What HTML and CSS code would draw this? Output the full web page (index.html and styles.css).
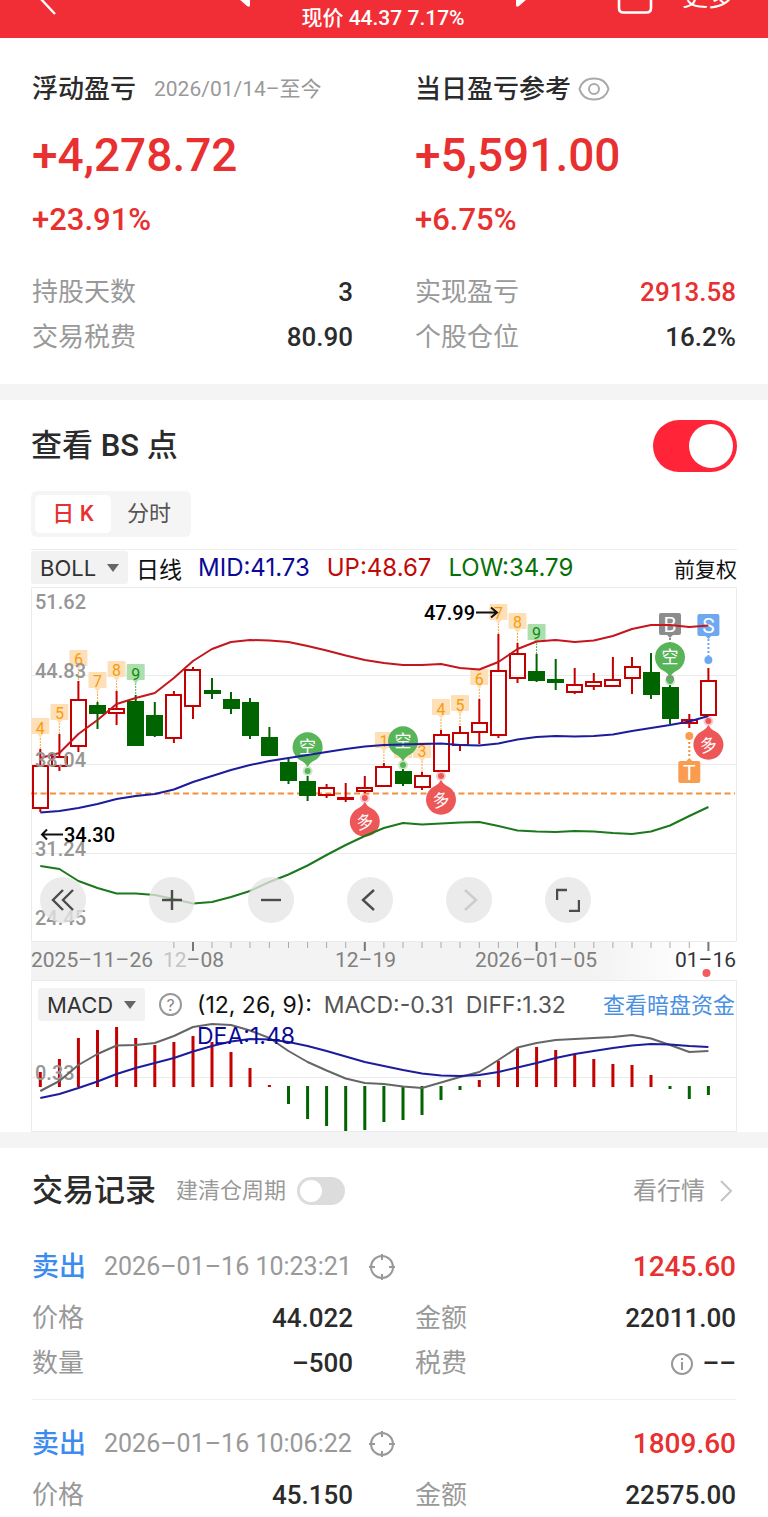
FILE: index.html
```html
<!DOCTYPE html>
<html lang="zh-CN">
<head>
<meta charset="utf-8">
<meta name="viewport" content="width=device-width, initial-scale=1">
<title>个股盈亏</title>
<link rel="stylesheet" href="styles.css">
</head>
<body>
<header class="topbar">
  <button class="topbar-back" aria-label="返回"><svg width="24" height="16" viewBox="0 0 24 16"><path d="M8-2 23 14" fill="none" stroke="currentColor" stroke-width="2.4"/></svg></button>
  <div class="topbar-center">
    <button aria-label="上一只"><svg width="12" height="10" viewBox="0 0 12 10"><path d="M0-1 8 6Q11 8 11 5V-1Z" fill="currentColor"/></svg></button>
    <span class="topbar-price">现价 44.37 7.17%</span>
    <button aria-label="下一只"><svg width="12" height="10" viewBox="0 0 12 10"><path d="M12-1 4 6Q1 8 1 5V-1Z" fill="currentColor"/></svg></button>
  </div>
  <div class="topbar-actions">
    <button aria-label="分享"><svg width="36" height="16" viewBox="0 0 36 16"><path d="M2-4V8Q2 12.500 6.500 12.500H29.500Q34 12.500 34 8V-4" fill="none" stroke="currentColor" stroke-width="2.6"/></svg></button>
    <button class="topbar-more">更多</button>
  </div>
</header>

<main>
<section class="summary">
  <div class="summary-col">
    <h2 class="summary-title">浮动盈亏<span class="summary-range">2026/01/14–至今</span></h2>
    <p class="summary-amount">+4,278.72</p>
    <p class="summary-rate">+23.91%</p>
    <dl class="facts">
      <div class="fact"><dt>持股天数</dt><dd>3</dd></div>
      <div class="fact"><dt>交易税费</dt><dd>80.90</dd></div>
    </dl>
  </div>
  <div class="summary-col">
    <h2 class="summary-title">当日盈亏参考<button class="eye" aria-label="隐藏金额"><svg width="32" height="24" viewBox="0 0 32 24"><g fill="none" stroke="currentColor" stroke-width="2"><path d="M1.500 12C3.500 5 9 1.500 16 1.500S28.500 5 30.500 12C28.500 19 23 22.500 16 22.500S3.500 19 1.500 12Z"/><circle cx="16" cy="12" r="5"/></g></svg></button></h2>
    <p class="summary-amount">+5,591.00</p>
    <p class="summary-rate">+6.75%</p>
    <dl class="facts">
      <div class="fact"><dt>实现盈亏</dt><dd class="up">2913.58</dd></div>
      <div class="fact"><dt>个股仓位</dt><dd>16.2%</dd></div>
    </dl>
  </div>
</section>

<section class="market">
  <div class="market-head">
    <label class="section-title" for="bs">查看 BS 点</label>
    <input class="switch switch-large" type="checkbox" id="bs" checked>
  </div>
  <div class="segment">
    <button class="segment-item is-active">日 K</button>
    <button class="segment-item">分时</button>
  </div>

  <div class="legend">
    <div class="picker"><select aria-label="主图指标"><option>BOLL</option></select><svg width="12" height="8" viewBox="0 0 12 8"><path d="M0 0H12L6 8Z" fill="currentColor"/></svg></div>
    <span class="legend-period">日线</span>
    <span class="mid">MID:41.73</span>
    <span class="upper">UP:48.67</span>
    <span class="lower">LOW:34.79</span>
    <span class="legend-adjust">前复权</span>
  </div>

  <div class="kline">
    <svg class="chart" viewBox="31 587 706 393" role="img" aria-label="日K线图">
      <defs>
        <linearGradient id="axis-bg" x1="0" x2="1"><stop offset="0" stop-color="#f3f3f3"/><stop offset=".8" stop-color="#f3f3f3"/><stop offset=".95" stop-color="#fff"/></linearGradient>
        <path id="tag" d="M-8-1H8Q9-1 9 0V14Q9 15 8 15H3L0 19-3 15H-8Q-9 15-9 14V0Q-9-1-8-1Z"/>
        <g id="pin"><path d="M0 20C-2 17-3 15.500-7 13.500A15 15 0 1 1 7 13.500C3 15.500 2 17 0 20Z"/><circle cy="24" r="5" opacity=".3"/><circle cy="24" r="3"/></g>
        <path id="flag" d="M-9-11H9Q11-11 11-9V9Q11 11 9 11H3L0 14-3 11H-9Q-11 11-11 9V-9Q-11-11-9-11Z"/>
      </defs>
      <path class="grid" d="M31 675.500H737M31 764.500H737M31 853.500H737"/>
      <rect x="31" y="942" width="706" height="38" fill="url(#axis-bg)"/>
      <path class="frame" d="M31.500 941.500V587.500H736.500V941.500Z"/>

      <g class="leader">
        <path d="M40.300 738V749M59.400 723V734M78.400 669V681M97.500 691V702M116.600 680V691M383.900 751V763M422 761V772M441 719V730M460 714V726M479.300 689V699M498.400 623V634M517.500 633V643"/>
        <path class="leader-green" d="M135.700 683V695M536.600 643V654"/>
      </g>
      <g class="tags">
        <use href="#tag" x="40.300" y="719"/><use href="#tag" x="59.400" y="705"/><use href="#tag" x="78.400" y="651"/><use href="#tag" x="97.500" y="673"/><use href="#tag" x="116.600" y="662"/>
        <use href="#tag" x="383.900" y="733"/><use href="#tag" x="403" y="743"/><use href="#tag" x="422" y="743"/><use href="#tag" x="441" y="700"/><use href="#tag" x="460" y="696"/><use href="#tag" x="479.300" y="670"/><use href="#tag" x="498.400" y="605"/><use href="#tag" x="517.500" y="614"/>
      </g>
      <g class="tags-green"><use href="#tag" x="135.700" y="665"/><use href="#tag" x="536.600" y="625"/></g>
      <g class="tag-text">
        <text x="40.300" y="734">4</text><text x="59.400" y="719">5</text><text x="78.400" y="665">6</text><text x="97.500" y="687">7</text><text x="116.600" y="676">8</text>
        <text x="383.900" y="747">1</text><text x="403" y="757">2</text><text x="422" y="757">3</text><text x="441" y="715">4</text><text x="460" y="711">5</text><text x="479.300" y="685">6</text><text x="498.400" y="619">7</text><text x="517.500" y="628">8</text>
        <text class="nine" x="135.700" y="680">9</text><text class="nine" x="536.600" y="639">9</text>
      </g>

      <path class="avg-price" d="M31 793.500H735"/>

      <path class="wick wick-up" d="M40.300 749V766M40.300 808V812M59.400 734V757M59.400 766V771M78.400 681V700M78.400 746V752M116.600 691V709M116.600 713V725M173.900 691V695M173.900 738V743M193 667V670M193 706V719M326.600 784V788M326.600 796V798M345.700 783V802M364.800 776V788M364.800 791V793M383.900 763V767M422 772V776M422 788V790M441 730V735M460 726V732M460 745V751M479.300 699V723M479.300 732V744M498.400 634V671M498.400 735V738M517.500 643V653M517.500 678V683M574.700 668V685M574.700 692V694M593.800 673V681M593.800 687V690M612.900 657V679M612.900 686V687M632 657V667M632 678V694M689.300 714V720M689.300 723V728M708.400 668V681"/>
      <path class="wick wick-down" d="M97.500 702V729M135.700 695V746M154.800 702V737M212 678V699M231 692V714M250 698V739M269.400 727V756M288.500 759V784M307.600 776V801M403 769V786M536.600 654V682M555.700 659V690M651 653V699M670 685V724"/>
      <g class="body-down">
        <rect x="89" y="705" width="17" height="9"/><rect x="127" y="701" width="17" height="45"/><rect x="146" y="715" width="17" height="21"/><rect x="204" y="690" width="17" height="4"/><rect x="223" y="699" width="17" height="10"/><rect x="242" y="702" width="17" height="34"/><rect x="261" y="737" width="17" height="19"/><rect x="280" y="762" width="17" height="19"/><rect x="299" y="781" width="17" height="15"/><rect x="395" y="771" width="17" height="13"/><rect x="528" y="671" width="17" height="10"/><rect x="547" y="679" width="17" height="4"/><rect x="643" y="672" width="17" height="23"/><rect x="662" y="687" width="17" height="32"/>
      </g>
      <g class="body-up">
        <rect x="33" y="766" width="15" height="42"/><rect x="52" y="757" width="15" height="9"/><rect x="71" y="700" width="15" height="46"/><rect x="109" y="709" width="15" height="4"/><rect x="166" y="695" width="15" height="43"/><rect x="185" y="670" width="15" height="36"/><rect x="319" y="788" width="15" height="7"/><rect x="338" y="798" width="15" height="1"/><rect x="357" y="788" width="15" height="3"/><rect x="376" y="767" width="15" height="19"/><rect x="415" y="776" width="15" height="11"/><rect x="434" y="735" width="15" height="36"/><rect x="453" y="733" width="15" height="12"/><rect x="472" y="723" width="15" height="9"/><rect x="491" y="671" width="15" height="64"/><rect x="510" y="654" width="15" height="24"/><rect x="567" y="685" width="15" height="7"/><rect x="586" y="682" width="15" height="4"/><rect x="605" y="680" width="15" height="6"/><rect x="625" y="667" width="15" height="11"/><rect x="682" y="720" width="15" height="3"/><rect x="701" y="681" width="15" height="34"/>
      </g>

      <g class="pin-long"><use href="#pin" transform="translate(364.800 822) rotate(180)"/><use href="#pin" transform="translate(441 800) rotate(180)"/><use href="#pin" transform="translate(708.400 745) rotate(180)"/></g>
      <g class="pin-text"><text x="364.800" y="828" transform="rotate(-12 364.800 822)">多</text><text x="441" y="806" transform="rotate(-12 441 800)">多</text><text x="708.400" y="751" transform="rotate(-12 708.400 745)">多</text></g>

      <g class="flag-b"><use href="#flag" x="670" y="624"/><path d="M670 638V676"/><circle cx="670" cy="679" r="4"/></g>
      <g class="flag-s"><use href="#flag" x="708.400" y="625"/><path d="M708.400 639V658"/><circle cx="708.400" cy="660" r="4"/></g>
      <g class="flag-t"><use href="#flag" transform="translate(689.300 772) rotate(180)"/><path d="M689.300 738V758"/><circle cx="689.300" cy="736" r="4"/></g>
      <g class="flag-text"><text x="670" y="632">B</text><text x="708.400" y="633">S</text><text x="689.300" y="780">T</text></g>

      <g class="pin-short"><use href="#pin" x="307.600" y="747"/><use href="#pin" x="403" y="741"/><use href="#pin" x="670" y="657"/></g>
      <g class="pin-text"><text x="307.600" y="753">空</text><text x="403" y="747">空</text><text x="670" y="663">空</text></g>

      <polyline class="line upper-line" points="40.300,758 59.400,753 78.400,734 97.500,720 116.600,704 135.700,698 154.800,693 173.900,678 193,661 212,649 231,642 250,640 269.400,640.500 288.500,642 307.600,646 326.600,650.500 345.700,655.500 364.800,660 383.900,663 403,665 422,665 441,664 460,668 479.300,669.500 498.400,662 517.500,649 536.600,641.500 555.700,640 574.700,642 593.800,640.500 612.900,636 632,629 651,625 670,625 689.300,627 708.400,625.500"/>
      <polyline class="line mid-line" points="40.300,812.500 59.400,811 78.400,808 97.500,804 116.600,799 135.700,796 154.800,794 173.900,789.500 193,782 212,776 231,770 250,765 269.400,761 288.500,758 307.600,755 326.600,752 345.700,749 364.800,746.500 383.900,745 403,744.500 422,744 441,743.500 460,745 479.300,745.500 498.400,743.500 517.500,739.500 536.600,737 555.700,736 574.700,736.500 593.800,736 612.900,734.500 632,731 651,728 670,725 689.300,721.500 708.400,716"/>
      <polyline class="line lower-line" points="40.300,866 59.400,869 78.400,881 97.500,888 116.600,893.500 135.700,893.500 154.800,895 173.900,899 193,903.500 212,902 231,897 250,891 269.400,882 288.500,874.500 307.600,865.500 326.600,855 345.700,845 364.800,836 383.900,828 403,823 422,824.500 441,823.500 460,822.500 479.300,822 498.400,826 517.500,830.500 536.600,831.500 555.700,832 574.700,831 593.800,831.500 612.900,833 632,834 651,831.500 670,825.500 689.300,816 708.400,807"/>

      <g class="scale"><text x="35" y="609">51.62</text><text x="35" y="678">44.83</text><text x="35" y="767">38.04</text><text x="35" y="856">31.24</text><text x="35" y="925">24.45</text></g>
      <g class="extreme"><text x="424" y="620">47.99</text><path d="M476 612.500H497M491 607.500 497 612.500 491 617.500"/><text x="64" y="842">34.30</text><path d="M63 834.500H42M47 829.500 42 834.500 47 839.500"/></g>

      <path class="tick" d="M173.900 942V948M212 942V948M231 942V948M250 942V948M269.400 942V948M288.500 942V948M307.600 942V948M326.600 942V948M345.700 942V948M383.900 942V948M403 942V948M422 942V948M441 942V948M460 942V948M479.300 942V948M498.400 942V948M517.500 942V948M555.700 942V948M574.700 942V948M593.800 942V948M612.900 942V948M632 942V948M651 942V948M670 942V948M689.300 942V948"/>
      <path class="tick-major" d="M193 942V951M364.800 942V951M536.600 942V951M708.400 942V951"/>
      <g class="dates"><text x="31" y="967">2025–11–26</text><text x="163" y="967"><tspan class="faded">12</tspan>–08</text><text x="335" y="967">12–19</text><text x="475" y="967">2026–01–05</text><text class="current" x="736" y="967">01–16</text></g>
      <circle cx="706.500" cy="973" r="4" fill="#f25c5c"/>
    </svg>
    <div class="tools">
      <button class="tool tool-first" aria-label="最早"><svg width="24" height="24" viewBox="0 0 24 24"><path d="M12 2 2 12 12 22M22 2 12 12 22 22"/></svg></button>
      <button class="tool" aria-label="放大"><svg width="24" height="24" viewBox="0 0 24 24"><path d="M12 2V22M2 12H22"/></svg></button>
      <button class="tool" aria-label="缩小"><svg width="24" height="24" viewBox="0 0 24 24"><path d="M2 12H22"/></svg></button>
      <button class="tool" aria-label="向前"><svg width="24" height="24" viewBox="0 0 24 24"><path d="M16 2 5 12 16 22"/></svg></button>
      <button class="tool" aria-label="向后" disabled><svg width="24" height="24" viewBox="0 0 24 24"><path d="M8 2 19 12 8 22"/></svg></button>
      <button class="tool" aria-label="全屏"><svg width="24" height="24" viewBox="0 0 24 24"><path d="M1 12V2H11M23 12V23H13"/></svg></button>
    </div>
  </div>

  <div class="macd">
    <svg class="chart" viewBox="31 980 706 152" role="img" aria-label="MACD">
      <path class="frame" d="M31.500 980.500H736.500V1131.500H31.500Z"/>
      <path class="grid" d="M31 1077.500H737"/>
      <path class="bar bar-up" d="M40.300 1072V1087M59.400 1059V1087M78.400 1038V1087M97.500 1030V1087M116.600 1027V1087M135.700 1038V1087M154.800 1045V1087M173.900 1042V1087M193 1036V1087M212 1042V1087M231 1052V1087M250 1068V1087M269.400 1085V1087M479.300 1080V1087M498.400 1061V1087M517.500 1047V1087M536.600 1047V1087M555.700 1050V1087M574.700 1054V1087M593.800 1059V1087M612.900 1064V1087M632 1065V1087M651 1075V1087"/>
      <path class="bar bar-down" d="M288.500 1086V1104M307.600 1086V1119M326.600 1086V1126M345.700 1086V1131M364.800 1086V1130M383.900 1086V1122M403 1086V1120M422 1086V1115M441 1086V1100M460 1086V1090M670 1086V1089M689.300 1086V1099M708.400 1086V1095"/>
      <text class="scale" x="35" y="1080">0.33</text>
      <polyline class="line diff-line" points="40.300,1091 59.400,1081 78.400,1065 97.500,1054 116.600,1045.500 135.700,1045 154.800,1043 173.900,1036 193,1027 212,1024 231,1025 250,1030.500 269.400,1038 288.500,1051 307.600,1062 326.600,1070.500 345.700,1078.500 364.800,1083 383.900,1084 403,1086.500 422,1088 441,1082.500 460,1077 479.300,1072 498.400,1060 517.500,1047.500 536.600,1043 555.700,1040 574.700,1039 593.800,1038 612.900,1037 632,1035 651,1038.500 670,1045 689.300,1052 708.400,1051"/>
      <polyline class="line mid-line" points="40.300,1098 59.400,1094 78.400,1088 97.500,1081.500 116.600,1074 135.700,1068 154.800,1063 173.900,1058 193,1051.500 212,1046 231,1041.500 250,1039 269.400,1039.500 288.500,1042 307.600,1046 326.600,1051 345.700,1056.500 364.800,1062 383.900,1066 403,1070 422,1073.500 441,1075.500 460,1076 479.300,1075 498.400,1072 517.500,1067.500 536.600,1063 555.700,1058 574.700,1054 593.800,1051 612.900,1048 632,1045.500 651,1044 670,1044.500 689.300,1046 708.400,1047"/>
    </svg>
    <div class="macd-head">
      <div class="picker"><select aria-label="副图指标"><option>MACD</option></select><svg width="12" height="8" viewBox="0 0 12 8"><path d="M0 0H12L6 8Z" fill="currentColor"/></svg></div>
      <button class="help" aria-label="指标说明">?</button>
      <p class="macd-values"><span>(12, 26, 9):</span> <span class="diff">MACD:-0.31</span> <span class="diff">DIFF:1.32</span> <span class="mid">DEA:1.48</span></p>
      <a class="macd-link" href="#funds">查看暗盘资金</a>
    </div>
  </div>
</section>

<section class="trades">
  <div class="trades-head">
    <h2 class="section-title">交易记录</h2>
    <label class="cycle" for="cycle">建清仓周期</label>
    <input class="switch" type="checkbox" id="cycle">
    <a class="quote-link" href="#quote">看行情<svg width="14" height="24" viewBox="0 0 14 24"><path d="M2 2 12 12 2 22" fill="none" stroke="#c4c4c4" stroke-width="2"/></svg></a>
  </div>

  <article class="trade">
    <div class="trade-head">
      <span class="side">卖出</span><time>2026–01–16 10:23:21</time>
      <button class="locate" aria-label="定位"><svg width="26" height="28" viewBox="0 0 26 28"><g fill="none" stroke="currentColor" stroke-width="2"><circle cx="13" cy="14" r="11"/><path d="M13 1V7M13 21V27M0 14H6M20 14H26"/></g></svg></button>
      <strong class="profit">1245.60</strong>
    </div>
    <dl class="trade-facts">
      <div class="fact"><dt>价格</dt><dd>44.022</dd></div>
      <div class="fact"><dt>金额</dt><dd>22011.00</dd></div>
      <div class="fact"><dt>数量</dt><dd>–500</dd></div>
      <div class="fact"><dt>税费</dt><dd class="fee"><svg width="24" height="24" viewBox="0 0 24 24"><g fill="none" stroke="#999" stroke-width="2"><circle cx="12" cy="12" r="10"/><path d="M12 10V18M12 6V8"/></g></svg>––</dd></div>
    </dl>
  </article>

  <article class="trade">
    <div class="trade-head">
      <span class="side">卖出</span><time>2026–01–16 10:06:22</time>
      <button class="locate" aria-label="定位"><svg width="26" height="28" viewBox="0 0 26 28"><g fill="none" stroke="currentColor" stroke-width="2"><circle cx="13" cy="14" r="11"/><path d="M13 1V7M13 21V27M0 14H6M20 14H26"/></g></svg></button>
      <strong class="profit">1809.60</strong>
    </div>
    <dl class="trade-facts">
      <div class="fact"><dt>价格</dt><dd>45.150</dd></div>
      <div class="fact"><dt>金额</dt><dd>22575.00</dd></div>
    </dl>
  </article>
</section>
</main>
</body>
</html>
```

FILE: styles.css
```css
* { box-sizing: border-box; }
body, h2, p, dl, dd { margin: 0; }
body {
  background: #fff;
  color: #2b2b2b;
  font-family: Roboto, "Noto Sans CJK SC", sans-serif;
}
svg { display: block; }
button {
  padding: 0;
  border: 0;
  background: none;
  color: inherit;
  font: inherit;
}
a { text-decoration: none; }

/* Top bar */
.topbar {
  display: grid;
  grid-template-columns: 1fr auto 1fr;
  align-items: start;
  height: 38px;
  padding: 0 34px 0 32px;
  overflow: hidden;
  background: #f12e36;
  color: #fff;
}
.topbar button { display: block; }
.topbar-back { justify-self: start; }
.topbar-center { display: flex; align-items: flex-start; gap: 50px; }
.topbar-price { padding-top: 3px; font-size: 21px; font-weight: 500; line-height: 30px; }
.topbar-actions { display: flex; justify-content: flex-end; gap: 29px; }
.topbar .topbar-more { margin-top: -22px; font-size: 26px; line-height: 36px; }

/* Profit summary */
.summary {
  display: grid;
  grid-template-columns: 1fr 1fr;
  gap: 62px;
  padding: 33px 32px 24px;
}
.summary-title {
  display: flex;
  align-items: center;
  font-size: 26px;
  font-weight: 500;
  line-height: 36px;
  white-space: nowrap;
}
.summary-range { margin-left: 18px; color: #999; font-size: 21px; font-weight: 400; }
.eye { margin-left: 7px; color: #aaa; }
.summary-amount { margin-top: 18px; color: #e93030; font-size: 46px; font-weight: 500; line-height: 60px; }
.summary-rate { margin-top: 17px; color: #e93030; font-size: 31px; font-weight: 500; line-height: 36px; }
.facts { margin-top: 32px; }
.fact { display: flex; justify-content: space-between; line-height: 45px; }
.fact dt { color: #999; font-size: 26px; }
.fact dd { font-size: 26px; font-weight: 500; }
.fact .up { color: #e93030; }
.fact .fee { display: flex; align-items: center; gap: 9px; }

/* Switches */
.switch {
  display: flex;
  align-items: center;
  appearance: none;
  width: 48px;
  height: 28px;
  margin: 0;
  padding: 3px;
  border-radius: 14px;
  background: #dcdcdc;
}
.switch::before { content: ""; width: 22px; height: 22px; border-radius: 50%; background: #fff; }
.switch-large { width: 84px; height: 52px; border-radius: 26px; padding: 4px; }
.switch-large::before { width: 44px; height: 44px; }
.switch:checked { justify-content: flex-end; background: #ff2438; }

/* Chart section */
.market { padding: 20px 31px 0; border-top: 16px solid #f4f4f4; border-bottom: 16px solid #f4f4f4; }
.market-head { display: flex; align-items: center; justify-content: space-between; }
.section-title { font-size: 31px; font-weight: 500; line-height: 46px; }
.segment {
  display: inline-flex;
  height: 46px;
  margin-top: 19px;
  padding: 4px;
  border-radius: 6px;
  background: #f5f5f5;
  vertical-align: top;
}
.segment-item { width: 76px; border-radius: 5px; color: #555; font-size: 22px; line-height: 38px; }
.segment-item.is-active { background: #fff; color: #e93030; font-weight: 500; }

.legend {
  display: flex;
  align-items: center;
  height: 38px;
  margin-top: 12px;
  padding-bottom: 2px;
  border-top: 1px solid #ececec;
  font-family: Inter, "Noto Sans CJK SC", sans-serif;
  font-size: 24px;
  line-height: 34px;
  white-space: nowrap;
}
.picker {
  display: flex;
  align-items: center;
  gap: 10px;
  height: 33px;
  padding: 0 9px;
  border-radius: 3px;
  background: #f2f2f2;
  color: #666;
}
.picker select {
  appearance: none;
  padding: 0;
  border: 0;
  background: none;
  color: #333;
  font-family: Inter, sans-serif;
  font-size: 22px;
}
.legend-period { margin-left: 8px; color: #111; font-family: "Noto Sans CJK SC", sans-serif; font-size: 23px; }
.legend .mid { margin-left: 16px; }
.mid { color: #0a0a96; }
.upper { margin-left: 17px; color: #c00a0a; }
.lower { margin-left: 17px; color: #067006; }
.legend-adjust { margin-left: auto; color: #111; font-family: "Noto Sans CJK SC", sans-serif; font-size: 21px; }

.kline, .macd { position: relative; }
.chart { width: 100%; height: auto; font-family: Roboto, "Noto Sans CJK SC", sans-serif; }
.grid, .frame { fill: none; stroke: #ebebeb; stroke-width: 1; }
.line { fill: none; stroke-width: 2; stroke-linejoin: round; }
.upper-line { stroke: #c4161c; }
.mid-line { stroke: #1c1c9c; }
.lower-line { stroke: #1c781c; }
.diff-line { stroke: #666; }
.avg-price { stroke: #f58f3c; stroke-width: 2; stroke-dasharray: 6 3.5; }
.wick { stroke-width: 2; }
.wick-up { stroke: #c40000; }
.wick-down { stroke: #006400; }
.body-up { fill: none; stroke: #c40000; stroke-width: 2; }
.body-down { fill: #006400; }
.bar { fill: none; stroke-width: 3; }
.bar-up { stroke: #c40000; }
.bar-down { stroke: #006400; }
.leader { fill: none; stroke: #f7a940; stroke-width: 1; stroke-dasharray: 2 1; }
.leader-green { stroke: #4db04d; }
.tags { fill: #fde0b8; }
.tags-green { fill: #addfad; }
.tag-text { fill: #fa9a0c; font-size: 16px; text-anchor: middle; }
.nine { fill: #0c8c0c; }
.pin-long { fill: #ed5757; }
.pin-short { fill: #57b457; }
.pin-text { fill: #fff; font-size: 17px; text-anchor: middle; }
.flag-b { fill: #8c8c8c; }
.flag-s { fill: #6ea8f0; }
.flag-t { fill: #fa9c50; }
.flag-b > path, .flag-s > path, .flag-t > path { stroke-width: 2; stroke-dasharray: 2 2; }
.flag-b > path { stroke: #8c8c8c; }
.flag-s > path { stroke: #6ea8f0; }
.flag-t > path { stroke: #f58f3c; }
.flag-text { fill: #fff; font-size: 21px; text-anchor: middle; }
.scale { fill: #969696; font-size: 20px; font-weight: 500; }
.extreme { fill: #000; font-size: 20px; font-weight: 500; }
.extreme path { fill: none; stroke: #111; stroke-width: 2; }
.tick { stroke: #aaa; }
.tick-major { stroke: #777; stroke-width: 2; }
.dates { fill: #808080; font-size: 21px; }
.dates .faded { fill: #c4c4c4; }
.dates .current { fill: #333; text-anchor: end; }

.tools { position: absolute; left: 9px; bottom: 57px; display: flex; gap: 53px; }
.tool {
  display: grid;
  place-items: center;
  width: 46px;
  height: 46px;
  border-radius: 50%;
  background: rgba(230, 230, 230, .78);
  color: #4c4c4c;
}
.tool svg { fill: none; stroke: currentColor; stroke-width: 2.4; }
.tool:disabled { color: #ccc; }
.tool-first { margin-right: 10px; }

.macd-head {
  position: absolute;
  top: 8px;
  left: 7px;
  right: 2px;
  display: flex;
  align-items: flex-start;
  font-family: Inter, "Noto Sans CJK SC", sans-serif;
  font-size: 22px;
  line-height: 33px;
}
.help {
  width: 23px;
  height: 23px;
  margin: 5px 0 0 14px;
  border: 2px solid #999;
  border-radius: 50%;
  color: #888;
  font-size: 16px;
  line-height: 18px;
}
.macd-values {
  display: flex;
  flex-wrap: wrap;
  flex: 1;
  column-gap: 12px;
  margin-left: 15px;
  padding-top: 2px;
  color: #111;
  font-size: 23px;
  line-height: 31px;
  white-space: nowrap;
}
.macd-values .diff { color: #555; }
.macd-link { padding-top: 1px; color: #4a90e2; }

/* Trade records */
.trades { padding: 20px 32px 0; }
.trades-head { display: flex; align-items: center; line-height: 46px; }
.cycle { margin: 0 11px 0 20px; color: #999; font-size: 22px; }
.quote-link { display: flex; align-items: center; gap: 14px; margin-left: auto; padding-right: 3px; color: #999; font-size: 24px; }
.trade { padding: 22px 0 13px; }
.trades-head + .trade { margin-top: 9px; }
.trade + .trade { padding-bottom: 0; border-top: 1px solid #f0f0f0; }
.trade-head { display: flex; align-items: center; line-height: 44px; }
.side { color: #3c8cf0; font-size: 27px; font-weight: 500; }
.trade-head time { margin-left: 18px; color: #999; font-size: 25px; }
.locate { margin-left: 17px; color: #999; }
.profit { margin-left: auto; color: #e93030; font-size: 28px; font-weight: 500; }
.trade-facts { display: grid; grid-template-columns: 1fr 1fr; column-gap: 62px; margin-top: 7px; }
```
